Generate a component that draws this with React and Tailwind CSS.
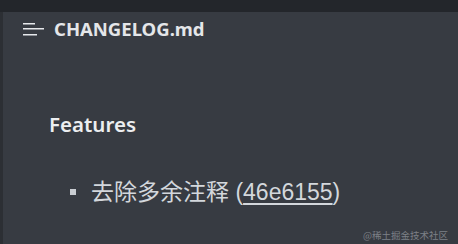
export default function App() {
  return (
    <div className="relative w-[458px] h-[244px] overflow-hidden bg-[#373b42] flex flex-col">
      {/* top strip */}
      <div className="h-[12px] bg-[#23262b] shrink-0" />

      <div className="flex-1 flex border-l-[3px] border-[#2c2f34]">
        <div className="flex-1 flex flex-col">
          {/* file header */}
          <div className="flex items-center h-[34px] pl-[20px]">
            <svg width="22" height="14" viewBox="0 0 22 14" className="shrink-0">
              <rect x="0" y="1" width="12" height="1.5" fill="#e6e8eb" />
              <rect x="0" y="6" width="21" height="1.5" fill="#e6e8eb" />
              <rect x="0" y="12" width="14" height="1.5" fill="#e6e8eb" />
            </svg>
            <span className="ml-[9px] text-[18.5px] font-bold text-[#e4e6e9] font-['Noto_Sans',sans-serif] leading-none">
              CHANGELOG.md
            </span>
          </div>

          {/* markdown body */}
          <div className="pl-[46px] pt-[68px]">
            <h2 className="text-[20.5px] font-semibold text-[#eceef0] font-['Noto_Sans',sans-serif] leading-none">
              Features
            </h2>
            <ul className="mt-[46px] pl-[21px]">
              <li className="flex items-center text-[23px] leading-none text-[#d3d7dc] font-['Liberation_Sans','Noto_Sans_CJK_SC',sans-serif]">
                <span className="w-[6px] h-[6px] bg-[#c9cdd2] mr-[15px] shrink-0" />
                <span>
                  去除多余注释 (<span className="underline underline-offset-[3px]">46e6155</span>)
                </span>
              </li>
            </ul>
          </div>
        </div>
      </div>

      <span className="absolute right-[10px] bottom-[4px] text-[9.5px] text-[#7d8087] font-['Noto_Sans_CJK_SC',sans-serif] leading-none">
        @稀土掘金技术社区
      </span>
    </div>
  );
}
